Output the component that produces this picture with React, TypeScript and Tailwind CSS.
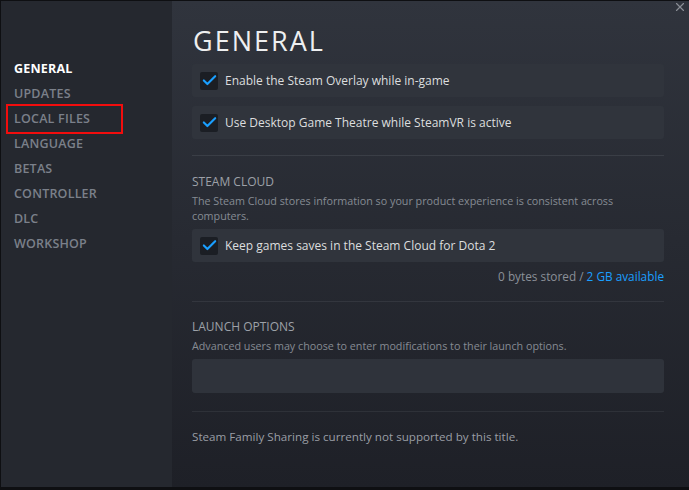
import { Check, X } from "lucide-react";

const navItems = ["GENERAL", "UPDATES", "LOCAL FILES", "LANGUAGE", "BETAS", "CONTROLLER", "DLC", "WORKSHOP"];

function CheckRow({ label }: { label: string }) {
  return (
    <div className="flex items-center h-[33px] rounded-[3px] bg-[#30343c] pl-[8px]">
      <div className="w-[18px] h-[18px] rounded-[2px] bg-[#1b1e24] flex items-center justify-center">
        <Check size={17} strokeWidth={3} className="text-[#1a9fff]" />
      </div>
      <span className="ml-[7px] text-[12px] text-[#dcdedf]">{label}</span>
    </div>
  );
}

export default function App() {
  return (
    <div
      className="w-[689px] h-[490px] flex bg-black border-t border-b-[3px] border-l border-[#0e0f12] overflow-hidden"
      style={{ fontFamily: '"Open Sans", "Noto Sans", sans-serif' }}
    >
      {/* Sidebar */}
      <div className="w-[171px] shrink-0 bg-[#25282f] pt-[56px]">
        {navItems.map((item, i) => (
          <div key={item} className="relative h-[25px] flex items-center pl-[13px]">
            <span
              className={`text-[12.5px] tracking-[0.2px] ${
                i === 0 ? "font-bold text-[#ffffff]" : "font-semibold text-[#7b808a]"
              }`}
            >
              {item}
            </span>
            {item === "LOCAL FILES" && (
              <div className="absolute left-[5px] top-[-3px] w-[117px] h-[30px] border-2 border-[#f20d0d]" />
            )}
          </div>
        ))}
      </div>

      {/* Main */}
      <div className="relative flex-1 bg-gradient-to-b from-[#30343d] to-[#1e2027] pl-[20px] pr-[25px] pt-[24px]">
        <X size={14} className="absolute right-[2px] top-[-1px] text-[#8a8e95]" />
        <h1 className="text-[27px] font-normal tracking-[2px] text-[#eeeff0] leading-[32px] ml-[1px]">GENERAL</h1>

        <div className="mt-[7px] flex flex-col gap-[9px]">
          <CheckRow label="Enable the Steam Overlay while in-game" />
          <CheckRow label="Use Desktop Game Theatre while SteamVR is active" />
        </div>

        <div className="mt-[16px] h-px bg-[#3a3e46]" />

        <div className="mt-[18px] text-[12px] text-[#9da1a8] leading-[16px]">STEAM CLOUD</div>
        <p className="mt-[4px] text-[10.75px] text-[#868b93] leading-[15px] pr-[40px]">
          The Steam Cloud stores information so your product experience is consistent across computers.
        </p>
        <div className="mt-[5px]">
          <CheckRow label="Keep games saves in the Steam Cloud for Dota 2" />
        </div>
        <div className="mt-[6px] text-right text-[11.8px] leading-[16px] text-[#8b9098]">
          0 bytes stored / <span className="text-[#1a9fff]">2 GB available</span>
        </div>

        <div className="mt-[17px] h-px bg-[#33363e]" />

        <div className="mt-[17px] text-[12px] text-[#9da1a8] leading-[16px]">LAUNCH OPTIONS</div>
        <p className="mt-[4px] text-[10.75px] text-[#868b93] leading-[15px]">
          Advanced users may choose to enter modifications to their launch options.
        </p>
        <div className="mt-[5px] h-[34px] rounded-[3px] bg-[#2f333b]" />

        <div className="mt-[18px] h-px bg-[#2e3138]" />

        <p className="mt-[17px] text-[11.65px] text-[#9a9ea5] leading-[16px]">
          Steam Family Sharing is currently not supported by this title.
        </p>
      </div>
    </div>
  );
}
